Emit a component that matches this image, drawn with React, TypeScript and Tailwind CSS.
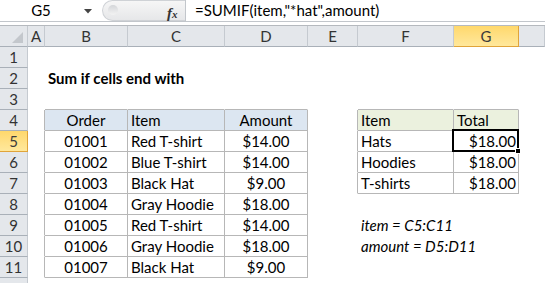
import type { ReactNode } from "react";

type Align = "left" | "center" | "right";

type CellSpec = {
  text?: string;
  align?: Align;
  bg?: string;
  edgeR?: boolean;
  edgeB?: boolean;
  bold?: boolean;
  italic?: boolean;
  overflow?: boolean;
  active?: boolean;
};

const columns = ["A", "B", "C", "D", "E", "F", "G", "H"];

const orders = [
  ["01001", "Red T-shirt", "$14.00"],
  ["01002", "Blue T-shirt", "$14.00"],
  ["01003", "Black Hat", "$9.00"],
  ["01004", "Gray Hoodie", "$18.00"],
  ["01005", "Red T-shirt", "$14.00"],
  ["01006", "Gray Hoodie", "$18.00"],
  ["01007", "Black Hat", "$9.00"],
];

const totals = [
  ["Hats", "$18.00"],
  ["Hoodies", "$18.00"],
  ["T-shirts", "$18.00"],
];

// Excel draws each gridline on the right/bottom of the cell before it,
// so the table's left/top edges come from the neighbouring cells.
function cellAt(row: number, col: string): CellSpec {
  const inOrders = row >= 4 && row <= 11;
  const inTotals = row >= 4 && row <= 7;

  if (row === 2 && col === "B") return { text: "Sum if cells end with", bold: true, overflow: true };
  if (row === 3 && ["B", "C", "D", "F", "G"].includes(col)) return { edgeB: true };
  if (col === "A" && inOrders) return { edgeR: true };
  if (col === "E" && inTotals) return { edgeR: true };

  if (inOrders && ["B", "C", "D"].includes(col)) {
    const base: CellSpec = { edgeR: true, edgeB: true };
    if (row === 4) {
      const head = { B: "Order", C: "Item", D: "Amount" }[col as "B" | "C" | "D"];
      return { ...base, bg: "bg-[#dce6f1]", text: head, align: col === "C" ? "left" : "center" };
    }
    const r = orders[row - 5];
    if (col === "B") return { ...base, text: r[0], align: "center" };
    if (col === "C") return { ...base, text: r[1], align: "left" };
    return { ...base, text: r[2], align: "center" };
  }

  if (inTotals && ["F", "G"].includes(col)) {
    const base: CellSpec = { edgeR: true, edgeB: true };
    if (row === 4) return { ...base, bg: "bg-[#ebf1de]", text: col === "F" ? "Item" : "Total", align: "left" };
    const r = totals[row - 5];
    if (col === "F") return { ...base, text: r[0], align: "left" };
    return { ...base, text: r[1], align: "right", active: row === 5 };
  }

  if (col === "F" && row === 9) return { text: "item = C5:C11", italic: true, overflow: true };
  if (col === "F" && row === 10) return { text: "amount = D5:D11", italic: true, overflow: true };

  return {};
}

function Cell({ spec }: { spec: CellSpec }) {
  const alignClass =
    spec.align === "center" ? "justify-center" : spec.align === "right" ? "justify-end pr-[2px]" : "justify-start pl-[3px]";

  return (
    <div
      className={`relative flex h-[21px] items-center border-r border-b text-[15px] leading-none text-black ${
        spec.edgeR ? "border-r-[#b7b7b7]" : "border-r-transparent"
      } ${spec.edgeB ? "border-b-[#b7b7b7]" : "border-b-transparent"} ${spec.bg ?? "bg-white"} ${alignClass} ${
        spec.overflow || spec.active ? "z-10 overflow-visible whitespace-nowrap" : "overflow-hidden"
      }`}
    >
      {spec.text && (
        <span className={`${spec.bold ? "font-bold" : ""} ${spec.italic ? "italic" : ""}`}>{spec.text}</span>
      )}
      {spec.active && (
        <>
          <span className="absolute -top-[2px] -left-[2px] -right-[1px] -bottom-[1px] border-2 border-black" />
          <span className="absolute -right-[3px] -bottom-[3px] h-[6px] w-[6px] border border-white bg-black" />
        </>
      )}
    </div>
  );
}

function HeaderCell({ children, active, className = "" }: { children?: ReactNode; active?: boolean; className?: string }) {
  return (
    <div
      className={`flex h-[21px] items-center justify-center border-r border-b text-[15px] leading-none ${
        active
          ? "border-r-[#e0a43a] border-b-[#e0a43a] bg-gradient-to-b from-[#ffd86b] to-[#ffe89c] text-[#3b3b3b]"
          : "border-r-[#c5cad0] border-b-[#a9b0b8] bg-[#e4e7eb] text-[#333]"
      } ${className}`}
    >
      {children}
    </div>
  );
}

function FormulaBar() {
  return (
    <div className="bg-white">
      <div className="flex h-[22px] items-stretch border-b border-[#c2c6cb]">
        <div className="relative flex w-[100px] items-center justify-center text-[15px] text-black">
          <span className="-ml-[18px]">G5</span>
          <svg className="absolute left-[84px] top-[9px]" width="8" height="5" viewBox="0 0 8 5">
            <path d="M0 0h8L4 4.5z" fill="#444" />
          </svg>
        </div>
        <div className="relative flex w-[85px] items-center">
          <div className="absolute inset-y-0 left-[2px] right-0 rounded-l-full border border-r-0 border-[#cfd2d6] bg-gradient-to-b from-[#f6f6f6] to-[#e6e7e9]" />
          <div className="absolute left-[8px] top-[5px] h-[10px] w-[10px] rounded-full bg-gradient-to-b from-[#d4d6d9] to-[#f3f3f3]" />
          <span className="absolute left-[67px] top-[2px] font-['Liberation_Serif',serif] text-[15px] font-bold italic text-[#333]">
            f<span className="text-[11px]">x</span>
          </span>
        </div>
        <div className="flex flex-1 items-center border-l border-[#c2c6cb] pl-[9px] text-[15px] text-black">
          =SUMIF(item,"*hat",amount)
        </div>
      </div>
      <div className="h-[4px] border-b border-[#b5b9be] bg-white" />
    </div>
  );
}

export default function App() {
  const rows = Array.from({ length: 12 }, (_, i) => i + 1);

  return (
    <div className="h-[283px] w-[545px] overflow-hidden bg-white font-['Lato','Noto_Sans',sans-serif]">
      <FormulaBar />
      <div className="grid grid-cols-[28px_17px_83px_97px_83px_50px_96px_65px_1fr]">
        <HeaderCell className="relative">
          <svg className="absolute right-[4px] bottom-[3px]" width="11" height="11" viewBox="0 0 11 11">
            <path d="M11 0V11H0z" fill="#c3c7cc" />
          </svg>
        </HeaderCell>
        {columns.map((c) => (
          <HeaderCell key={c} active={c === "G"}>
            {c === "H" ? null : c}
          </HeaderCell>
        ))}
        {rows.map((r) => (
          <Row key={r} row={r} />
        ))}
      </div>
    </div>
  );
}

function Row({ row }: { row: number }) {
  return (
    <>
      <HeaderCell active={row === 5}>{row < 12 ? row : null}</HeaderCell>
      {columns.map((c) => (
        <Cell key={c} spec={cellAt(row, c)} />
      ))}
    </>
  );
}
